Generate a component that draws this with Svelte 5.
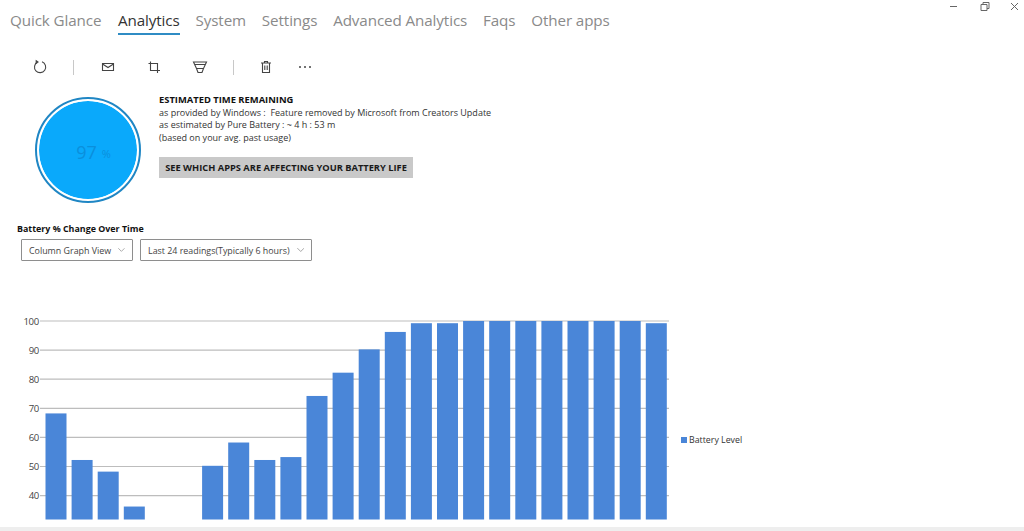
<script>
  // Pure Battery analytics page: tabs, toolbar, summary and the column chart.
  const tabs = ['Quick Glance', 'Analytics', 'System', 'Settings', 'Advanced Analytics', 'Faqs', 'Other apps'];
  const readings = [68, 52, 48, 36, null, null, 50, 58, 52, 53, 74, 82, 90, 96, 99, 99, 100, 100, 100, 100, 100, 100, 100, 99];
  const ticks = [100, 90, 80, 70, 60, 50, 40];

  const y = (v) => 321 + (100 - v) * 2.91;
  const barTop = (v) => Math.max(321, y(v) - 0.7);
  const base = 519.5;
</script>

<div class="page">
  <div class="caption" aria-label="Window controls">
    <svg width="124" height="14" viewBox="0 0 124 14">
      <path d="M50 6.5h7" />
      <path d="M81 4.5h6v6h-6zM83 4.5v-2h6v6h-2" />
      <path d="M111 3l7 7M118 3l-7 7" />
    </svg>
  </div>

  <nav class="tabs">
    {#each tabs as tab}
      <span class="tab" class:active={tab === 'Analytics'}>{tab}</span>
    {/each}
  </nav>

  <div class="toolbar">
    <svg class="ico refresh" width="18" height="18" viewBox="0 0 18 18">
      <path d="M6.500 4.100A5.600 5.600 0 1 0 11 3.800" /><path d="M5.200 2.800l1.800 1.300-1.800 1.300z" />
    </svg>
    <i class="sep first"></i>
    <svg class="ico" width="18" height="18" viewBox="0 0 18 18">
      <path d="M3.500 5.500h11v7h-11z" /><path d="M3.500 6L9 9.500 14.500 6" />
    </svg>
    <svg class="ico gap" width="18" height="18" viewBox="0 0 18 18">
      <path d="M5.500 3.500V12.500H15" /><path d="M3.500 5.500H12.500V15" />
    </svg>
    <svg class="ico gap" width="18" height="18" viewBox="0 0 18 18">
      <path d="M2.500 4h13L12.500 10.500h-7zM4 6.500h10M5.500 10.500L7 14.500h4l1.500-4" />
    </svg>
    <i class="sep second"></i>
    <svg class="ico" width="18" height="18" viewBox="0 0 18 18">
      <path d="M5.500 5h7v9.500h-7zM4 5h10M7.500 5V3.500h3V5M7.800 7.500v4.500M10.200 7.500v4.500" />
    </svg>
    <span class="more">
      <i></i><i></i><i></i>
    </span>
  </div>

  <section class="summary">
    <div class="gauge">
      <div class="disc"><span class="val">97</span><span class="pct">%</span></div>
    </div>
    <div class="info">
      <strong>ESTIMATED TIME REMAINING</strong>
      <p>as provided by Windows :&nbsp; Feature removed by Microsoft from Creators Update</p>
      <p>as estimated by Pure Battery : ~ 4 h : 53 m</p>
      <p>(based on your avg. past usage)</p>
      <button class="apps">SEE WHICH APPS ARE AFFECTING YOUR BATTERY LIFE</button>
    </div>
  </section>

  <h3 class="chart-title">Battery % Change Over Time</h3>
  <div class="pickers">
    <div class="picker first">
      <span>Column Graph View</span>
      <svg width="10" height="6" viewBox="0 0 10 6"><path d="M.5.5L5 5 9.500.5" /></svg>
    </div>
    <div class="picker second">
      <span>Last 24 readings(Typically 6 hours)</span>
      <svg width="10" height="6" viewBox="0 0 10 6"><path d="M.5.5L5 5 9.500.5" /></svg>
    </div>
  </div>

  <div class="chart">
    <svg class="plot" width="676" height="221" viewBox="0 310 676 221">
      {#each ticks as t}
        <line class="grid" x1="40" x2="669" y1={y(t)} y2={y(t)} />
        <text class="tick" x="39" y={y(t) + 3.500}>{t}</text>
      {/each}
      {#each readings as r, i}
        {#if r !== null}
          <rect class="bar" x={45.5 + i * 26.1} y={barTop(r)} width="21" height={base - barTop(r)} />
        {/if}
      {/each}
    </svg>
    <div class="legend"><i></i><span>Battery Level</span></div>
  </div>

  <div class="footer"></div>
</div>

<style>
  :global(body) { margin: 0; background: #fff; overflow: hidden; }

  .page {
    position: relative; width: 1024px; height: 531px; overflow: hidden;
    background: #fff; color: #222;
    font-family: "Open Sans", "Noto Sans", sans-serif;
  }

  .caption { position: absolute; top: 0; right: 0; height: 14px; line-height: 0; }
  .caption path { fill: none; stroke: #666; stroke-width: 1; }

  .tabs { display: flex; gap: 15.800px; padding: 8px 0 0 10px; height: 27px; }
  .tab { font-size: 15.200px; line-height: 24px; color: #8a8a8a; white-space: nowrap; letter-spacing: -.1px; }
  .tab.active { color: #333; border-bottom: 2px solid #2f8cc4; height: 25px; margin-left: .8px; }

  .toolbar { display: flex; align-items: center; height: 30px; margin-top: 17px; }
  .ico { flex: none; }
  .ico path { fill: none; stroke: #444; stroke-width: 1.100; }
  .ico.refresh { margin-left: 31px; }
  .ico.gap { margin-left: 28px; }
  .sep { display: block; width: 1px; height: 15px; background: #c8c8c8; }
  .sep.first { margin: 0 25px 0 24px; }
  .sep.second { margin: 0 23px 0 24px; }
  .more { display: flex; gap: 3px; margin-left: 24px; }
  .more i { width: 2px; height: 2px; border-radius: 50%; background: #444; }

  .summary { display: flex; margin-top: 3px; height: 133px; }
  .gauge { width: 159px; flex: none; padding: 14px 0 0 37px; box-sizing: border-box; }
  .disc {
    width: 84px; height: 98px; padding-left: 14px; box-sizing: content-box;
    display: flex; align-items: center; justify-content: center; gap: 5px;
    border-radius: 50%; background: #0aa9fb; background-clip: padding-box;
    border: 2px solid #fff; outline: 2px solid #1f86c4;
    color: #0a8fdc;
  }
  .val { font-size: 18px; margin: 3px 0 0 -3px; }
  .pct { font-size: 11px; margin-top: 7px; }

  .info { font-size: 9px; line-height: 12.500px; color: #333; padding-top: 9px; }
  .info strong { display: block; color: #111; font-weight: 700; font-size: 9.400px; }
  .info p { margin: 0; white-space: nowrap; }
  .apps {
    display: block; margin-top: 13px; height: 21px; width: 254px; padding: 0; border: 0;
    background: #c9c9c9; color: #1a1a1a; white-space: nowrap;
    font-family: inherit; font-size: 9.300px; font-weight: 700;
  }

  .chart-title { margin: 5px 0 0 17px; font-size: 8.900px; line-height: 12px; font-weight: 700; color: #111; }

  .pickers { display: flex; gap: 7px; margin: 4px 0 0 21px; }
  .picker {
    display: flex; align-items: center; gap: 7px; box-sizing: border-box;
    height: 22px; padding: 0 7px; border: 1px solid #8e8e8e; border-radius: 1px;
    font-size: 8.900px; color: #444; white-space: nowrap;
  }
  .picker.first { width: 112px; }
  .picker.second { width: 172px; }
  .picker path { fill: none; stroke: #888; stroke-width: 1; }

  .chart { display: flex; margin-top: 49px; }
  .plot { flex: none; display: block; }
  .grid { stroke: #bdbdbd; stroke-width: 1.200; }
  .tick { font-size: 9.600px; letter-spacing: -.3px; fill: #444; text-anchor: end; font-family: inherit; }
  .bar { fill: #4a86d8; }

  .legend { display: flex; align-items: center; gap: 2px; margin: 123px 0 0 5px; height: 14px; font-size: 8.800px; color: #333; }
  .legend i { width: 6px; height: 6px; background: #4a86d8; }

  .footer { position: absolute; left: 0; right: 0; bottom: 0; height: 4px; background: #eee; }
</style>
